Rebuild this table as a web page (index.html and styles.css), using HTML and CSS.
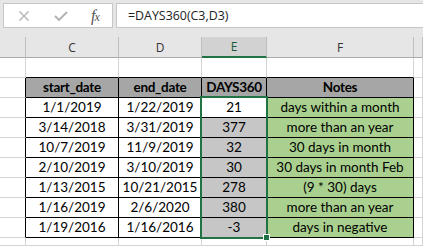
FILE: index.html
```html
<!DOCTYPE html>
<html>
<head>
<meta charset="utf-8">
<link rel="stylesheet" href="styles.css">
</head>
<body>
<div class="app">
  <div class="toolbar">
    <div class="fxbox">
      <svg class="ico x" width="12" height="12" viewBox="0 0 12 12"><path d="M1.5 1.5 L10.5 10.5 M10.5 1.5 L1.5 10.5" stroke="#b4b4b4" stroke-width="1.4" fill="none"/></svg>
      <svg class="ico ck" width="14" height="10" viewBox="0 0 14 10"><path d="M1 5 L5 9 L13 1" stroke="#b4b4b4" stroke-width="2" fill="none"/></svg>
      <span class="fx">f<span class="fxs">x</span></span>
    </div>
    <div class="formula">=DAYS360(C3,D3)</div>
  </div>
  <div class="sheet">
    <div class="ch"></div><div class="ch">C</div><div class="ch">D</div><div class="ch ch-sel">E</div><div class="ch">F</div><div class="ch"></div>

    <div class="c"></div><div class="c bb"></div><div class="c bb"></div><div class="c bb"></div><div class="c bb"></div><div class="c"></div>

    <div class="c br"></div><div class="c t th">start_date</div><div class="c t th">end_date</div><div class="c t th">DAYS360</div><div class="c t th">Notes</div><div class="c"></div>

    <div class="c br"></div><div class="c t">1/1/2019</div><div class="c t">1/22/2019</div><div class="c t">21</div><div class="c t g">days within a month</div><div class="c"></div>
    <div class="c br"></div><div class="c t">3/14/2018</div><div class="c t">3/31/2019</div><div class="c t s">377</div><div class="c t g">more than an year</div><div class="c"></div>
    <div class="c br"></div><div class="c t">10/7/2019</div><div class="c t">11/9/2019</div><div class="c t s">32</div><div class="c t g">30 days in month</div><div class="c"></div>
    <div class="c br"></div><div class="c t">2/10/2019</div><div class="c t">3/10/2019</div><div class="c t s">30</div><div class="c t g">30 days in month Feb</div><div class="c"></div>
    <div class="c br"></div><div class="c t">1/13/2015</div><div class="c t">10/21/2015</div><div class="c t s">278</div><div class="c t g">(9 * 30) days</div><div class="c"></div>
    <div class="c br"></div><div class="c t">1/16/2019</div><div class="c t">2/6/2020</div><div class="c t s">380</div><div class="c t g">more than an year</div><div class="c"></div>
    <div class="c br"></div><div class="c t">1/19/2016</div><div class="c t">1/16/2016</div><div class="c t s">-3</div><div class="c t g">days in negative</div><div class="c"></div>

    <div class="c"></div><div class="c"></div><div class="c"></div><div class="c"></div><div class="c"></div><div class="c"></div>
  </div>
  <div class="selection"><div class="handle"></div></div>
</div>
</body>
</html>
```
FILE: styles.css
```css
html, body { margin: 0; padding: 0; }
body { background: #fff; font-family: "Lato", "Liberation Sans", sans-serif; }
.app { position: relative; width: 423px; height: 246px; overflow: hidden; }

.toolbar {
  height: 37px; box-sizing: border-box; background: #e6e6e6;
  display: flex; align-items: flex-start; padding: 3px 0 0 3px; gap: 3px;
}
.fxbox {
  width: 110px; height: 25px; box-sizing: border-box;
  background: #fff; border: 1px solid #c6c6c6;
  display: flex; align-items: center; position: relative;
}
.ico.x { margin-left: 14px; }
.ico.ck { margin-left: 24px; }
.fx {
  margin-left: 23px; font-family: "Liberation Serif", serif; font-style: italic;
  color: #555; font-size: 16px; line-height: 1; letter-spacing: -1px;
}
.fxs { font-size: 12px; }
.formula {
  flex: 1; height: 25px; box-sizing: border-box; background: #fff;
  border: 1px solid #c6c6c6; border-right: none;
  font-family: "Open Sans", sans-serif; font-size: 12.4px; color: #222;
  padding: 4px 0 0 11px; line-height: 16px;
}

.sheet {
  display: grid;
  grid-template-columns: 26px 93px 83px 65px 147px 1fr;
  grid-template-rows: 21px repeat(9, 20px) 1fr;
  height: 209px;
}
.ch {
  background: #e6e6e6; box-sizing: border-box;
  border-right: 1px solid #bfbfbf; border-bottom: 1px solid #ababab;
  font-family: "Open Sans", sans-serif; font-size: 12px; color: #333;
  display: flex; align-items: center; justify-content: center;
}
.ch-sel { background: #d2d2d2; border-bottom: 2px solid #217346; color: #1d5b37; }
.c {
  box-sizing: border-box; border-right: 1px solid #d4d4d4; border-bottom: 1px solid #d4d4d4;
  display: flex; align-items: flex-end; justify-content: center;
  font-size: 13.5px; line-height: 16px; color: #000; padding-bottom: 2px;
  white-space: nowrap;
}
.c.bb { border-bottom-color: #000; }
.c.br { border-right-color: #000; }
.c.t { border-right-color: #000; border-bottom-color: #000; }
.c.th { background: #a6a6a6; font-weight: bold; letter-spacing: -0.3px; }
.c.g { background: #a9d08e; }
.c.s { background: #c6c6c6; }

.selection {
  position: absolute; left: 200px; top: 96px; width: 68px; height: 143px;
  box-sizing: border-box; border: 2px solid #217346;
}
.handle {
  position: absolute; right: -4px; bottom: -4px; width: 5px; height: 5px;
  background: #217346; border: 1px solid #fff;
}
```
